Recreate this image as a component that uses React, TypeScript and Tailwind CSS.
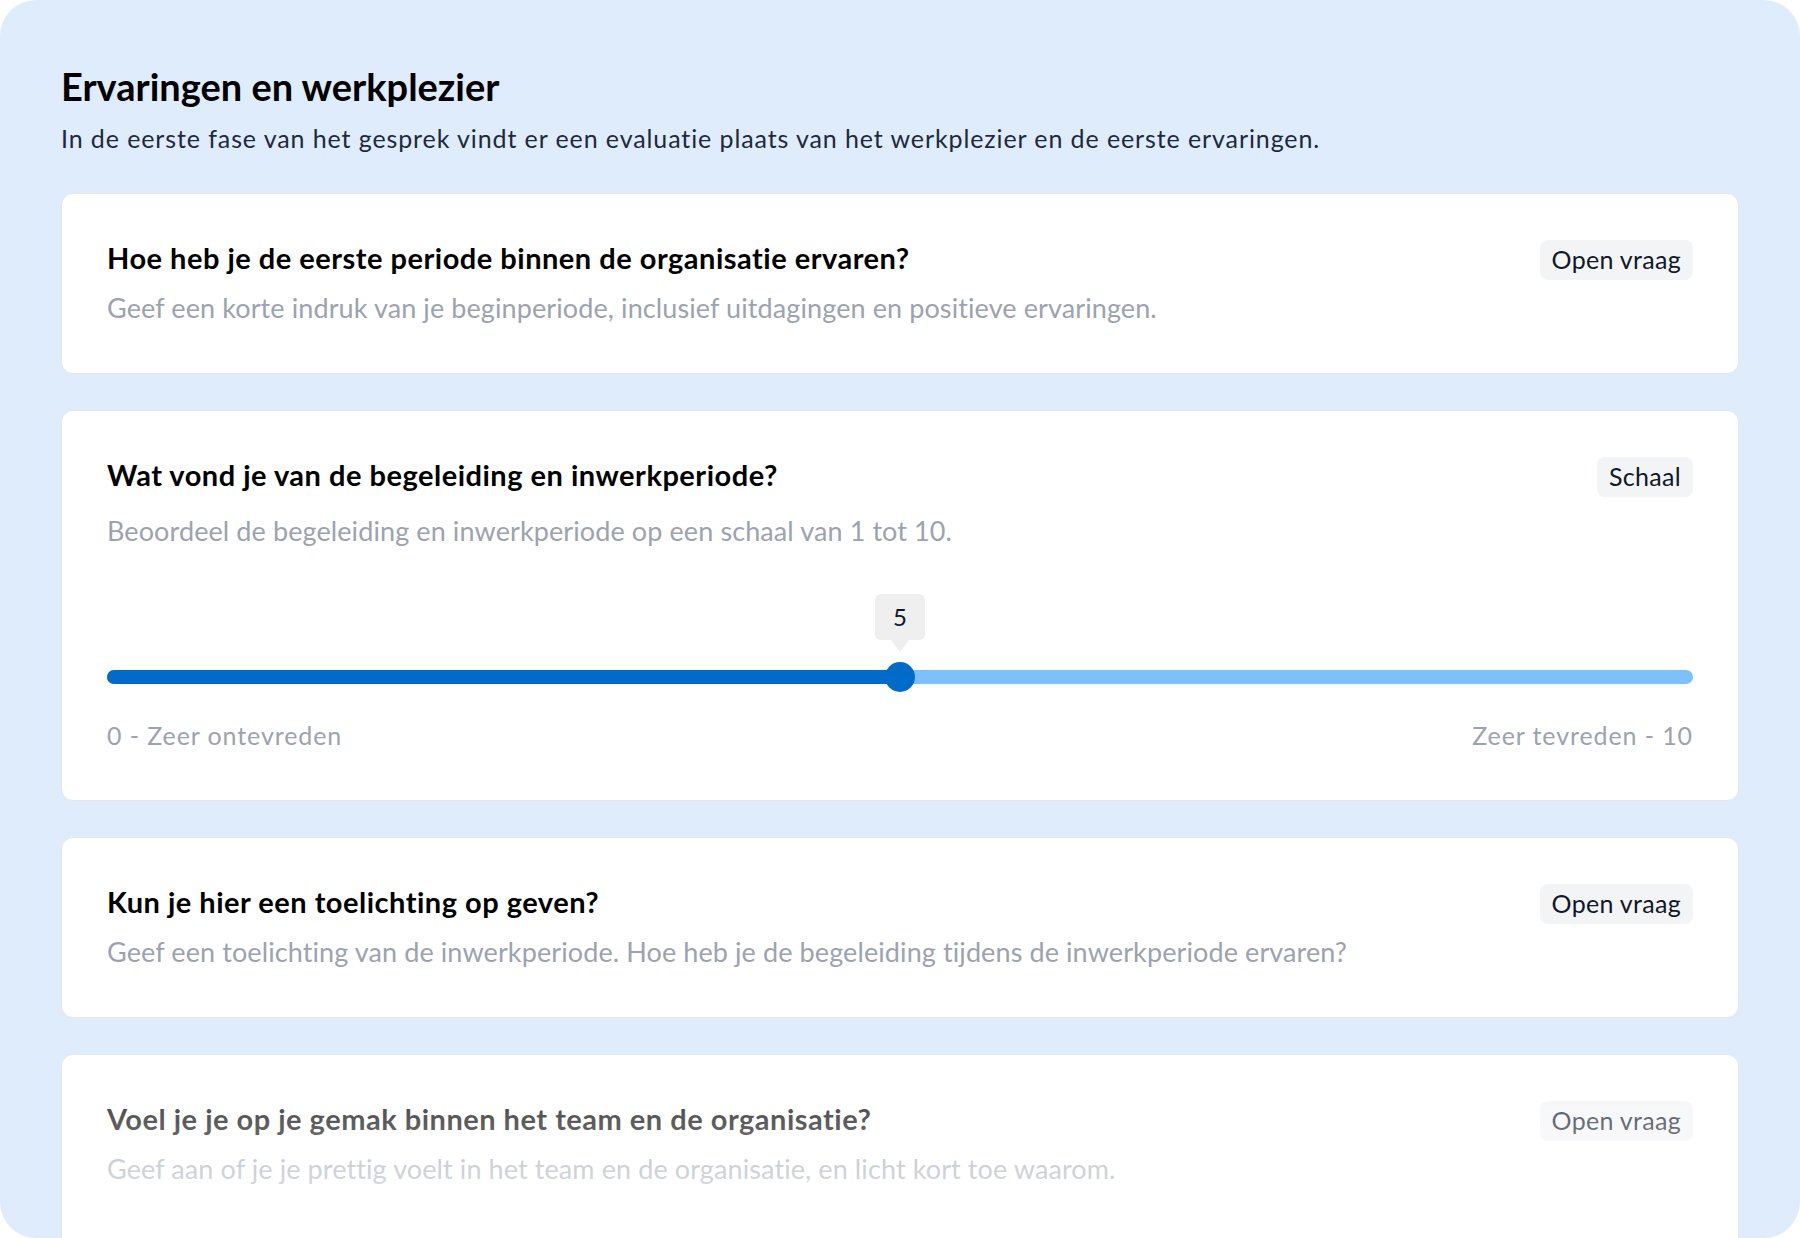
import { useState } from "react";

type Question = {
  title: string;
  description: string;
  type: string;
};

const questions: Question[] = [
  {
    title: "Hoe heb je de eerste periode binnen de organisatie ervaren?",
    description:
      "Geef een korte indruk van je beginperiode, inclusief uitdagingen en positieve ervaringen.",
    type: "Open vraag",
  },
  {
    title: "Kun je hier een toelichting op geven?",
    description:
      "Geef een toelichting van de inwerkperiode. Hoe heb je de begeleiding tijdens de inwerkperiode ervaren?",
    type: "Open vraag",
  },
  {
    title: "Voel je je op je gemak binnen het team en de organisatie?",
    description:
      "Geef aan of je je prettig voelt in het team en de organisatie, en licht kort toe waarom.",
    type: "Open vraag",
  },
];

function TypeBadge({ label }: { label: string }) {
  return (
    <span className="flex h-[40px] shrink-0 items-center rounded-[8px] bg-[#f3f4f6] px-[12px] text-[25px] tracking-[0.3px] text-[#111827]">
      {label}
    </span>
  );
}

function CardHeader({ title, type }: { title: string; type: string }) {
  return (
    <div className="flex items-center justify-between gap-6">
      <h2 className="pb-[4px] text-[29px] font-bold leading-[30px] tracking-[0.5px] text-black">{title}</h2>
      <TypeBadge label={type} />
    </div>
  );
}

function QuestionCard({ question, faded = false }: { question: Question; faded?: boolean }) {
  return (
    <div
      className={`relative rounded-[12px] border border-[#e4e7eb] bg-white px-[45px] pt-[46px] ${
        faded ? "pb-[140px]" : "pb-[47px]"
      }`}
    >
      <CardHeader title={question.title} type={question.type} />
      <p className="mt-[10px] text-[27px] leading-[36px] tracking-[0.1px] text-[#9ca3af]">
        {question.description}
      </p>

      {faded && (
        <div className="pointer-events-none absolute inset-0 rounded-[12px] bg-linear-to-b from-white/15 to-white" />
      )}
    </div>
  );
}

function ScaleCard() {
  const [value] = useState(5);
  const min = 0;
  const max = 10;
  const pct = ((value - min) / (max - min)) * 100;

  return (
    <div className="rounded-[12px] border border-[#e4e7eb] bg-white px-[45px] pb-[49px] pt-[46px]">
      <CardHeader title="Wat vond je van de begeleiding en inwerkperiode?" type="Schaal" />
      <p className="mt-[16px] text-[27px] leading-[36px] tracking-[0.1px] text-[#9ca3af]">
        Beoordeel de begeleiding en inwerkperiode op een schaal van 1 tot 10.
      </p>

      <div className="relative mt-[45px] h-[98px]">
        <div className="absolute inset-x-0 top-[76px] h-[14px] rounded-full bg-[#7cc1fb]" />
        <div
          className="absolute left-0 top-[76px] h-[14px] rounded-full bg-[#006bc8]"
          style={{ width: `${pct}%` }}
        />
        <div
          className="absolute top-[68px] size-[30px] -translate-x-1/2 rounded-full bg-[#006bc8]"
          style={{ left: `${pct}%` }}
        />
        <div className="absolute top-0 flex -translate-x-1/2 flex-col items-center" style={{ left: `${pct}%` }}>
          <div className="flex h-[46px] w-[50px] items-center justify-center rounded-[6px] bg-[#efefef] text-[24px] text-[#111827]">
            {value}
          </div>
          <div className="h-0 w-0 border-x-[9px] border-t-[12px] border-x-transparent border-t-[#efefef]" />
        </div>
      </div>

      <div className="mt-[27px] flex justify-between text-[25px] leading-[32px] tracking-[0.9px] text-[#9ca3af]">
        <span>0 - Zeer ontevreden</span>
        <span>Zeer tevreden - 10</span>
      </div>
    </div>
  );
}

export default function App() {
  return (
    <div className="min-h-screen bg-white [font-family:Lato,'Noto_Sans',sans-serif]">
      <div className="h-[1238px] overflow-hidden rounded-[36px] bg-[#dfecfc] px-[61px] pt-[63px]">
        <h1 className="text-[38px] font-bold leading-[46px] text-black">Ervaringen en werkplezier</h1>
        <p className="mt-[13px] text-[25px] leading-[32px] tracking-[0.9px] text-[#1e293b]">
          In de eerste fase van het gesprek vindt er een evaluatie plaats van het werkplezier en de eerste
          ervaringen.
        </p>

        <div className="mt-[39px] flex flex-col gap-[36px]">
          <QuestionCard question={questions[0]} />
          <ScaleCard />
          <QuestionCard question={questions[1]} />
          <QuestionCard question={questions[2]} faded />
        </div>
      </div>
    </div>
  );
}
